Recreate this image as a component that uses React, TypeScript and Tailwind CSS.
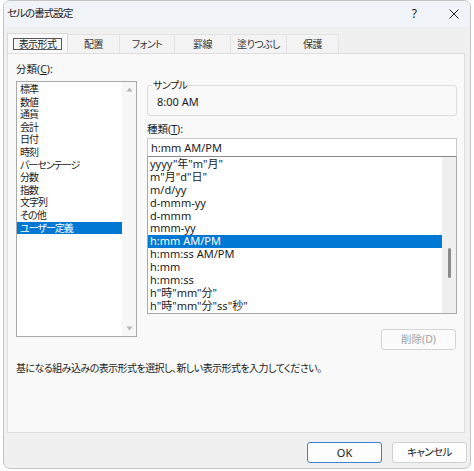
const categories = [
  "標準",
  "数値",
  "通貨",
  "会計",
  "日付",
  "時刻",
  "パーセンテージ",
  "分数",
  "指数",
  "文字列",
  "その他",
  "ユーザー定義",
];

const formats = [
  'yyyy"年"m"月"',
  'm"月"d"日"',
  "m/d/yy",
  "d-mmm-yy",
  "d-mmm",
  "mmm-yy",
  "h:mm AM/PM",
  "h:mm:ss AM/PM",
  "h:mm",
  "h:mm:ss",
  'h"時"mm"分"',
  'h"時"mm"分"ss"秒"',
];

const tabs = [
  { label: "表示形式", w: "w-[61px]" },
  { label: "配置", w: "w-[52px]" },
  { label: "フォント", w: "w-[55px]" },
  { label: "罫線", w: "w-[56px]" },
  { label: "塗りつぶし", w: "w-[56px]" },
  { label: "保護", w: "w-[52px]" },
];

const Arrow = ({ up }: { up?: boolean }) => (
  <svg width="7" height="5" viewBox="0 0 7 5">
    <path d={up ? "M0.5 4.5 L3.5 0.5 L6.5 4.5 Z" : "M0.5 0.5 L3.5 4.5 L6.5 0.5 Z"} fill="#b4b4b4" />
  </svg>
);

export default function App() {
  return (
    <div
      className="w-[474px] h-[471px] bg-white pl-[3px] text-[#1b1b1b] [font-feature-settings:'palt']"
      style={{ fontFamily: '"Noto Sans", "Noto Sans CJK JP", sans-serif' }}
    >
      <div className="w-[468px] h-[469px] border border-[#c4c4c4] rounded-[7px] bg-[#f0f0f0] flex flex-col overflow-hidden">
        {/* title bar */}
        <div className="h-[26px] shrink-0 bg-[#f0f3f8] flex items-center pl-[3px] pr-[11px] text-[10.5px]">
          <span className="flex-1 tracking-[-0.9px]">セルの書式設定</span>
          <span className="text-[12px] mr-[32px]">?</span>
          <svg width="10" height="10" viewBox="0 0 10 10">
            <path d="M0.5 0.5 L9.5 9.5 M9.5 0.5 L0.5 9.5" stroke="#222" strokeWidth="1" />
          </svg>
        </div>

        {/* tabs */}
        <div className="mt-[7px] ml-[3px] flex h-[19px] relative z-10">
          {tabs.map((t, i) => (
            <div
              key={t.label}
              className={
                i === 0
                  ? `${t.w} h-[20px] -mt-[1px] bg-[#f9f9f9] border border-b-0 border-[#dadada] flex items-center justify-center text-[10px] tracking-[-0.6px]`
                  : `${t.w} h-[19px] bg-[#f3f3f3] border-t border-r border-[#e2e2e2] flex items-center justify-center text-[10px] tracking-[-0.6px] text-[#333]`
              }
            >
              {i === 0 ? (
                <span className="border border-[#555] px-[5px] h-[12px] leading-[10px] flex items-center">
                  {t.label}
                </span>
              ) : (
                t.label
              )}
            </div>
          ))}
        </div>

        {/* panel */}
        <div className="ml-[3px] mr-[5px] h-[380px] shrink-0 bg-[#f9f9f9] border border-[#dedede] pl-[8px] pr-[7px] pt-[9px] flex flex-col">
          <div className="flex">
            {/* left column */}
            <div className="w-[121px] flex flex-col">
              <div className="h-[12px] leading-[12px] text-[10.5px]">
                分類(<span className="underline">C</span>):
              </div>
              <div className="mt-[6px] h-[256px] bg-white border border-[#a9a9a9] flex">
                <div className="flex-1 pt-[1px]">
                  {categories.map((c, i) => (
                    <div
                      key={c}
                      className={
                        i === categories.length - 1
                          ? "h-[12.6px] leading-[12.6px] pl-[3px] text-[10px] tracking-[-1px] bg-[#0078d4] text-white"
                          : "h-[12.6px] leading-[12.6px] pl-[3px] text-[10px] tracking-[-1px]"
                      }
                    >
                      {c}
                    </div>
                  ))}
                </div>
                <div className="w-[14px] bg-[#f7f7f7] flex flex-col items-center justify-between py-[5px]">
                  <Arrow up />
                  <Arrow />
                </div>
              </div>
            </div>

            {/* right column */}
            <div className="ml-[10px] w-[310px] flex flex-col">
              <div className="mt-[22px] h-[31px] border border-[#dcdcdc] rounded-[3px] relative pl-[9px] pt-[10px]">
                <span className="absolute left-[4px] -top-[7px] bg-[#f9f9f9] px-[1px] text-[10px] tracking-[-0.6px] leading-[12px]">
                  サンプル
                </span>
                <div className="text-[11px] leading-[12px]">8:00 AM</div>
              </div>
              <div className="mt-[7px] h-[12px] leading-[12px] text-[10.5px]">
                種類(<span className="underline">T</span>):
              </div>
              <div className="mt-[3px] h-[19px] bg-white border border-[#c9c9c9] border-b-[#8a8a8a] pl-[3px] text-[11px] leading-[17px]">
                h:mm AM/PM
              </div>
              <div className="h-[157px] bg-white border border-[#a9a9a9] border-t-0 flex">
                <div className="flex-1 pt-[1px]">
                  {formats.map((f, i) => (
                    <div
                      key={f}
                      className={
                        i === 6
                          ? "h-[12.9px] leading-[12.9px] pl-[2px] text-[11px] bg-[#0078d4] text-white"
                          : "h-[12.9px] leading-[12.9px] pl-[2px] text-[11px]"
                      }
                    >
                      {f}
                    </div>
                  ))}
                </div>
                <div className="w-[14px] bg-[#f0f0f0] pt-[91px] flex justify-center">
                  <div className="w-[3px] h-[30px] bg-[#8a8a8a] rounded-full" />
                </div>
              </div>
              <div className="mt-[15px] self-end mr-[1px] w-[75px] h-[21px] border border-[#d4d4d4] rounded-[3px] bg-[#fbfbfb] flex items-center justify-center text-[10.5px] text-[#a2a2a2]">
                削除(D)
              </div>
            </div>
          </div>
          <div className="mt-[12px] h-[12px] leading-[12px] text-[10px] tracking-[-0.55px]">
            基になる組み込みの表示形式を選択し、新しい表示形式を入力してください。
          </div>
        </div>

        {/* footer */}
        <div className="flex-1 flex justify-end items-start pt-[9px] pr-[3px] gap-[10px]">
          <button className="w-[75px] h-[21px] border border-[#3f7fcf] rounded-[3px] bg-[#fdfdfd] text-[11px] leading-[19px]">
            OK
          </button>
          <button className="w-[75px] h-[21px] border border-[#d0d0d0] rounded-[3px] bg-[#fdfdfd] text-[10.5px] tracking-[-0.6px] leading-[19px]">
            キャンセル
          </button>
        </div>
      </div>
    </div>
  );
}
